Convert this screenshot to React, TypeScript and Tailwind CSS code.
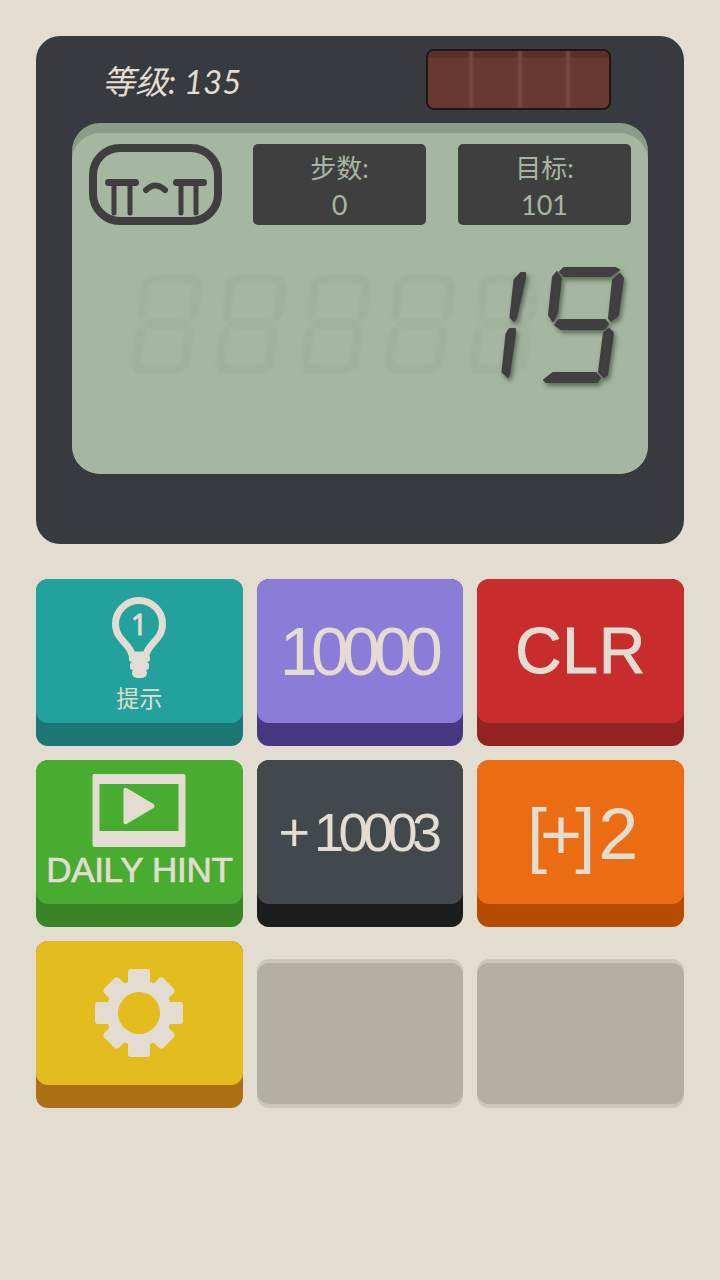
const CJK = "font-['Lato','Noto_Sans_CJK_SC',sans-serif]"
const ARIAL = "font-['Liberation_Sans',Arial,sans-serif]"

const SEGMENTS = {
  top: '564,268 615,268 619,270 610,276 564,276 560,272',
  upperLeft: '557,272 561,278 557,313 553,321 549,315 553,277',
  upperRight: '620,274 623,278 618,315 611,321 609,318 613,280',
  middle: '559,320 605,320 608,324 604,329 561,329 555,325',
  lowerLeft: '552,329 556,333 550,372 545,377 541,372 547,333',
  lowerRight: '609,329 613,333 607,375 604,377 599,372 604,333',
  bottom: '553,373 596,373 600,378 597,382 546,382 544,380',
}

const ONE = ['521,273 525,273 525,278 516,318 514,321 510.500,317 514.500,280', '509.500,329 515,329 515,333 509,375 508,377 502.500,372 506.500,334']

function Display() {
  const ghosts = [-328, -243.5, -159, -74.5, 10]
  return (
    <svg className="mt-[25px] block" width="576" height="150" viewBox="72 250 576 150">
      <defs>
        <filter id="ghost-blur">
          <feGaussianBlur stdDeviation="1.5" />
        </filter>
        <filter id="lcd-shadow" x="-20%" y="-20%" width="140%" height="140%">
          <feDropShadow dx="2" dy="3" stdDeviation="2.500" floodColor="#4f5f4c" floodOpacity="0.9" />
        </filter>
      </defs>
      <g filter="url(#ghost-blur)" fill="#a0b19c" stroke="#a0b19c" strokeWidth="2.500" strokeLinejoin="round">
        {ghosts.map((x) => (
          <g key={x} transform={`translate(${x} 48) scale(0.85)`}>
            {Object.values(SEGMENTS).map((p) => (
              <polygon key={p} points={p} />
            ))}
          </g>
        ))}
      </g>
      <g filter="url(#lcd-shadow)" fill="#3f3f3f" stroke="#3f3f3f" strokeWidth="2" strokeLinejoin="round">
        {ONE.map((p) => (
          <polygon key={p} points={p} />
        ))}
        <polygon points={SEGMENTS.top} />
        <polygon points={SEGMENTS.upperLeft} />
        <polygon points={SEGMENTS.upperRight} />
        <polygon points={SEGMENTS.middle} />
        <polygon points={SEGMENTS.lowerRight} />
        <polygon points={SEGMENTS.bottom} />
      </g>
    </svg>
  )
}

function Face() {
  return (
    <svg width="133" height="81" viewBox="89 144 133 81" fill="none" stroke="#3f3f3f" strokeLinecap="round">
      <rect x="93" y="148" width="125" height="73" rx="27" strokeWidth="8" />
      <path d="M108.500 182.500H135.500M176.500 182.500H203.500" strokeWidth="7" />
      <path d="M114 185V213M130 185V213M181 185V213M196 185V213" strokeWidth="5" />
      <path d="M146 190C150 186.500 153 185.500 155 185.500C158 185.500 161 186.500 165 190" strokeWidth="6" />
    </svg>
  )
}

function Stat({ label, value }: { label: string; value: string }) {
  return (
    <div className={`flex h-[81px] w-[173px] flex-col items-center rounded-[5px] bg-[#3f3f3f] pt-1.5 text-[#a6b7a1] ${CJK}`}>
      <span className="text-[26px] leading-[36px]">{label}</span>
      <span className="text-[27px] leading-[37px]">{value}</span>
    </div>
  )
}

function Bulb() {
  return (
    <svg width="60" height="84" viewBox="109 595 60 84" fill="#e3dcd0">
      <path
        d="M132 655C130 643 115.500 640 115.500 624A23.500 23.500 0 1 1 162.500 624C162.500 640 148 643 146 655Z"
        fill="none"
        stroke="#e3dcd0"
        strokeWidth="7"
        strokeLinejoin="round"
      />
      <rect x="129" y="655" width="21" height="7" rx="3" />
      <rect x="130" y="662" width="19" height="8" rx="3" />
      <rect x="132" y="668" width="15" height="10" rx="5" />
      <text x="139" y="635" textAnchor="middle" fontSize="29" fontFamily="Noto Sans, sans-serif" stroke="#e3dcd0" strokeWidth="0.8">
        1
      </text>
    </svg>
  )
}

function Video() {
  return (
    <svg width="94" height="74" viewBox="92.500 774 94 74" fill="#e3dcd0">
      <path fillRule="evenodd" d="M95 774H184Q186 774 186 776V845Q186 847 184 847H95Q93 847 93 845V776Q93 774 95 774ZM100 784V831H179V784Z" />
      <path d="M124 790Q124 787 127 788L154 804Q156 806 154 808L127 824Q124 825 124 822Z" />
    </svg>
  )
}

function Gear() {
  const straight = [0, 90, 180, 270]
  const diagonal = [45, 135, 225, 315]
  return (
    <svg width="90" height="90" viewBox="-45 -45 90 90" fill="#e3dcd0">
      {straight.map((a) => (
        <rect key={a} x="-11" y="-44" width="22" height="24" rx="3" transform={`rotate(${a})`} />
      ))}
      {diagonal.map((a) => (
        <rect key={a} x="-10.500" y="-42" width="21" height="24" rx="4" transform={`rotate(${a})`} />
      ))}
      <circle r="33" />
      <circle r="21" fill="#e3bc1d" />
    </svg>
  )
}

function Key({ face, side, children }: { face: string; side: string; children: React.ReactNode }) {
  return (
    <div className={`h-[167px] overflow-hidden rounded-xl ${side}`}>
      <div className={`flex h-[144px] flex-col items-center rounded-xl text-[#e3dcd0] ${face}`}>{children}</div>
    </div>
  )
}

function EmptyKey() {
  return (
    <div className="mt-[18px] h-[149px] rounded-xl bg-[#cdc6b9] py-1">
      <div className="h-[141px] rounded-xl bg-[#b5aea2]" />
    </div>
  )
}

export default function App() {
  return (
    <div className="min-h-[1280px] bg-[#e3dcd0] px-9 pt-9">
      <div className="h-[508px] rounded-3xl bg-[#373b3f]">
        <div className="flex h-[87px] items-center justify-between pl-[66px] pr-[73px]">
          <span className={`mt-1 text-[33px] italic leading-none text-[#e3dcd0] ${CJK}`}>等级: 135</span>
          <div className="relative h-[61px] w-[185px] overflow-hidden rounded-lg border-2 border-[#1d1816] bg-[#6a3832]">
            <div className="h-[7px] bg-[#5c2f2a]" />
            <div className="absolute inset-y-0 left-[41px] w-1 bg-[#784840] blur-[1px]" />
            <div className="absolute inset-y-0 left-[90px] w-1 bg-[#784840] blur-[1px]" />
            <div className="absolute inset-y-0 left-[138px] w-1 bg-[#784840] blur-[1px]" />
          </div>
        </div>
        <div className="mx-9 h-[351px] rounded-[28px] bg-[#8b9c88] pt-2.5">
          <div className="h-[341px] rounded-[28px] bg-[#a6b7a1] pt-[11px]">
            <div className="flex items-start pl-[17px]">
              <Face />
              <div className="ml-[31px] flex gap-8">
                <Stat label="步数:" value="0" />
                <Stat label="目标:" value="101" />
              </div>
            </div>
            <Display />
          </div>
        </div>
      </div>

      <div className="mt-[35px] grid grid-cols-3 gap-x-3.5 gap-y-3.5">
        <Key face="bg-[#23a19c] pt-4" side="bg-[#1a7775]">
          <Bulb />
          <span className={`mt-1 text-[23px] leading-[30px] ${CJK}`}>提示</span>
        </Key>
        <Key face="justify-center bg-[#8b7cd8]" side="bg-[#463781]">
          <span className={`pr-1 text-[68px] leading-none tracking-[-6.500px] ${ARIAL}`}>10000</span>
        </Key>
        <Key face="justify-center bg-[#c92c2c]" side="bg-[#932221]">
          <span className={`text-[64px] leading-none tracking-[1px] [-webkit-text-stroke:1px_#e3dcd0] ${ARIAL}`}>CLR</span>
        </Key>
        <Key face="bg-[#48ac30] pt-3.5" side="bg-[#388426]">
          <Video />
          <span className={`whitespace-nowrap text-[35px] leading-[44px] tracking-[-0.300px] [-webkit-text-stroke:0.7px_#e3dcd0] ${ARIAL}`}>
            DAILY HINT
          </span>
        </Key>
        <Key face="justify-center bg-[#43484c]" side="bg-[#1a1c1e]">
          <span className={`pr-[5px] text-[54px] leading-none tracking-[-5.500px] ${ARIAL}`}>+ 10003</span>
        </Key>
        <Key face="justify-center bg-[#ec6c14]" side="bg-[#b54c00]">
          <span className={`mt-1 pl-1 text-[72px] leading-none ${ARIAL}`}>
            <span className="tracking-[-7px]">[+]</span>
            <span className="ml-2.5">2</span>
          </span>
        </Key>
        <Key face="justify-center bg-[#e3bc1d]" side="bg-[#ab7114]">
          <Gear />
        </Key>
        <EmptyKey />
        <EmptyKey />
      </div>
    </div>
  )
}
